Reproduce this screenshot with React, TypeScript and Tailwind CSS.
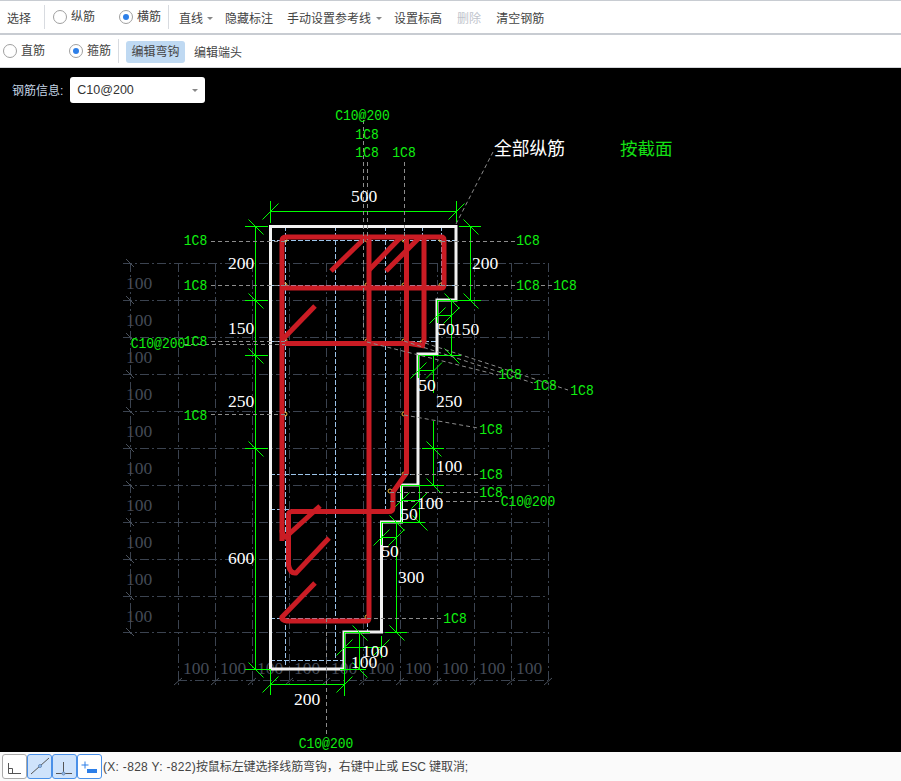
import type { ReactNode } from "react";

type Seg = [number, number, number, number];

const h = (y: number, x1: number, x2: number): Seg => [x1, y, x2, y];
const v = (x: number, y1: number, y2: number): Seg => [x, y1, x, y2];
const slash = (x: number, y: number): Seg => [x - 8, y + 8, x + 8, y - 8];
const back = (x: number, y: number): Seg => [x - 7, y - 7, x + 8, y + 8];

const gridX = [178, 215, 252, 289, 326, 363, 400, 437, 474, 511, 548];
const gridY = [263, 300, 337, 374, 411, 448, 485, 522, 559, 596, 632];

const greenLines: Seg[] = [
  // top 500
  h(211.5, 270.5, 456), v(270.5, 201, 223), v(456.5, 201, 222), slash(270.5, 211.5), slash(456.5, 211.5),
  // left chain
  v(255.5, 226.5, 669),
  h(226.5, 245, 268), back(255.5, 226.5),
  h(300.5, 245, 268), back(255.5, 300.5),
  h(355.5, 245, 268), back(255.5, 355.5),
  h(448.5, 245, 268), back(255.5, 448.5),
  h(669.5, 245, 270), back(255.5, 669.5),
  // right 200
  v(470.5, 226.5, 300), h(226.5, 459, 481), h(300.5, 437, 481), back(470.5, 226.5), back(470.5, 300.5),
  // first step
  v(451.5, 300, 355), h(355.5, 418, 461), back(451.5, 300.5), back(451.5, 355.5),
  v(437.5, 300, 323), h(315.5, 437.5, 451.5), slash(437.5, 315.5), slash(451.5, 315.5),
  // second step
  v(418.5, 355, 378), h(370.5, 418.5, 434), slash(418.5, 370.5), slash(434, 370.5),
  v(433.5, 355, 393), v(433.5, 421, 485), back(433.5, 448.5), h(448.5, 422, 444),
  back(433.5, 485.5), h(485.5, 402, 444),
  // third step
  v(401.5, 485, 522), h(500.5, 401.5, 419), v(419.5, 485, 522), slash(401.5, 500.5), slash(419.5, 500.5),
  h(522.5, 382, 425), back(419.5, 522.5), back(396.5, 522.5),
  v(396.5, 522, 632), h(632.5, 385, 407), back(396.5, 632.5),
  v(381.5, 522, 545), h(537.5, 381.5, 396.5), slash(381.5, 537.5), slash(396.5, 537.5),
  // bottom step
  h(632.5, 344, 370), back(359.5, 632.5), v(344.5, 632, 696), v(359.5, 632, 670),
  h(647.5, 344, 382), slash(344.5, 647.5), slash(381.5, 647.5), v(381.5, 636, 658),
  h(669.5, 340, 366), back(359.5, 669.5),
  // bottom 200
  h(684.5, 270.5, 344), v(270.5, 669, 695), slash(270.5, 684.5), slash(344.5, 684.5),
];

const paleLines: Seg[] = [
  v(285.5, 226, 665), v(335.5, 226, 660), v(385.5, 226, 510), v(404.5, 226, 345),
  v(422.5, 226, 345), v(441.5, 226, 290), v(367.5, 510, 632),
  h(240.5, 270, 456), h(285.5, 270, 456), h(341.5, 270, 437),
  h(474.5, 270, 418), h(509.5, 270, 385), h(618.5, 270, 370), h(660.5, 270, 343),
];

const greyLeaders: Seg[] = [
  h(241.5, 211, 285), h(285.5, 211, 285), h(341.5, 211, 285), h(344.5, 184, 285), h(414.5, 211, 285),
  h(241.5, 441, 516), h(285.5, 441, 516), h(285.5, 541, 552),
  v(363.5, 120, 340), v(367.5, 162, 240), v(404.5, 162, 240), v(326.5, 618, 738),
  [456, 224, 493, 152],
  [367, 342, 498, 375], [404, 341, 533, 383], [425, 343, 568, 390],
  [404, 415, 478, 428],
  h(474.5, 404, 478), h(492.5, 390, 478), h(501.5, 390, 500), h(618.5, 367, 441),
];

const rebarPaths = [
  "M282 541V241Q282 237 286 237H441Q444 237 444 240V285Q444 288 441 288H282",
  "M282 340L315 306",
  "M331 271L366 237",
  "M369 237V618Q369 621 366 621H287Q281 620 282 617L315 583",
  "M369 270L401 237",
  "M386 271L420 237",
  "M406.500 237V473L393 492V507Q393 511.500 389 511.500H292Q288 511.500 288.500 516V565Q290 574 296 573L329 538",
  "M424 237V344",
  "M282 343.500H410L425 346",
  "M282 530Q282 538 290 538",
  "M288 535L320 506",
];

const nodes: [number, number][] = [
  [285, 240], [285, 285], [285, 340], [285, 414], [367, 240], [367, 285], [404, 240], [404, 285],
  [441, 240], [441, 285], [367, 341], [404, 341], [422, 342], [404, 414], [404, 474], [390, 491], [367, 617],
];

type Label = [string, number, number];

const whiteLabels: Label[] = [
  ["500", 364, 196], ["200", 241, 263], ["200", 485, 263], ["150", 241, 328], ["50", 446, 329], ["150", 466, 329],
  ["50", 427, 385], ["250", 449, 401], ["250", 241, 401], ["100", 449, 466], ["100", 430, 503], ["50", 409, 514],
  ["50", 390, 551], ["300", 411, 577], ["100", 375, 651], ["100", 364, 662], ["600", 241, 558], ["200", 307, 699],
];

const greenLabels: Label[] = [
  ["C10@200", 362.5, 116], ["1C8", 367, 135], ["1C8", 367, 153], ["1C8", 404, 153],
  ["1C8", 195.5, 241], ["1C8", 195.5, 286], ["1C8", 195.5, 342], ["C10@200", 158, 344], ["1C8", 195.5, 416],
  ["1C8", 528, 241], ["1C8", 528, 286], ["1C8", 565, 286],
  ["1C8", 510, 375], ["1C8", 545, 386], ["1C8", 582, 391], ["1C8", 491, 430], ["1C8", 491, 475], ["1C8", 491, 493],
  ["C10@200", 528, 502], ["1C8", 455, 619], ["C10@200", 326, 744],
];

function Lines({ items, className, dash }: { items: Seg[]; className: string; dash?: string }) {
  return (
    <g className={className} strokeDasharray={dash}>
      {items.map(([x1, y1, x2, y2], i) => (
        <line key={i} x1={x1} y1={y1} x2={x2} y2={y2} />
      ))}
    </g>
  );
}

function Labels({ items, className, tall = 1 }: { items: Label[]; className: string; tall?: number }) {
  return (
    <g className={className} textAnchor="middle" dominantBaseline="central">
      {items.map(([text, x, y], i) => (
        <text key={i} transform={`translate(${x} ${y}) scale(1 ${tall})`}>
          {text}
        </text>
      ))}
    </g>
  );
}

function Drawing() {
  const gridLines: Seg[] = [
    ...gridY.map((y) => h(y + 0.5, 123, 548)),
    ...gridX.map((x) => v(x + 0.5, 263, 688)),
    v(130.5, 263, 636),
    h(680.5, 178, 548),
  ];
  const gridTicks: Seg[] = [
    ...gridY.map((y): Seg => [126, y - 4, 134, y + 4]),
    ...gridX.map((x): Seg => [x - 4, 685, x + 4, 678]),
  ];
  return (
    <svg className="absolute inset-0 h-full w-full" viewBox="0 68 901 684">
      <Lines items={gridLines} className="fill-none stroke-[#3b4350] stroke-1" dash="9 3 2 3" />
      <Lines items={gridTicks} className="fill-none stroke-[#4a515c] stroke-1" />
      <g className="fill-[#444b57] font-['Liberation_Serif',serif] text-[17.5px]" textAnchor="middle" dominantBaseline="central">
        {[283, 320, 357, 394, 431, 468, 505, 542, 579, 616].map((y) => (
          <text key={y} x={139} y={y}>100</text>
        ))}
        {[196, 233, 270, 307, 344, 381, 418, 455, 492, 529].map((x) => (
          <text key={x} x={x} y={668}>100</text>
        ))}
      </g>
      <Lines items={paleLines} className="fill-none stroke-[#9cc4ea] stroke-1" dash="5 2" />
      <path
        d="M270.5 226.500H456V300H437V354H418V485H401.500V522H381.500V632H344V669H270.500Z"
        className="fill-none stroke-[#f2f2f2] stroke-3"
      />
      <Lines items={greenLines} className="fill-none stroke-[#00ff00] stroke-1" />
      <g className="fill-none stroke-[#e8b838] stroke-1">
        {nodes.map(([x, y]) => (
          <circle key={`${x}-${y}`} cx={x} cy={y} r={2} />
        ))}
      </g>
      <g className="fill-none stroke-[#ca1c24] stroke-[5px]">
        {rebarPaths.map((d) => (
          <path key={d} d={d} />
        ))}
      </g>
      <Lines items={greyLeaders} className="fill-none stroke-[#8c8c8c] stroke-1" dash="4 3" />
      <Labels items={greenLabels} tall={1.18} className="fill-[#10f010] font-['Liberation_Mono',monospace] text-[13px]" />
      <Labels items={whiteLabels} className="fill-white font-['Liberation_Serif',serif] text-[17.5px]" />
      <text x={494} y={147} dominantBaseline="central" className="fill-white font-['Noto_Sans_CJK_SC',sans-serif] text-[17.8px]">
        全部纵筋
      </text>
      <text x={620} y={147} dominantBaseline="central" className="fill-[#14e014] font-['Noto_Sans_CJK_SC',sans-serif] text-[17.5px]">
        按截面
      </text>
    </svg>
  );
}

function Radio({ label, checked = false, className = "" }: { label: string; checked?: boolean; className?: string }) {
  return (
    <label className={`flex items-center gap-1 ${className}`}>
      <span className="flex h-[14px] w-[14px] items-center justify-center rounded-full border border-[#a0a0a0] bg-white">
        {checked ? <span className="h-[6px] w-[6px] rounded-full bg-[#2d7fe8]" /> : null}
      </span>
      <span>{label}</span>
    </label>
  );
}

function Caret() {
  return <span className="block h-0 w-0 border-x-[3px] border-t-[3px] border-x-transparent border-t-[#888]" />;
}

function Sep() {
  return <span className="block h-[24px] w-px bg-[#d8dbe0]" />;
}

function IconButton({ active, tint, children }: { active: boolean; tint: boolean; children: ReactNode }) {
  return (
    <button
      type="button"
      className={`h-[25px] w-[25px] rounded-[3px] border ${active ? "border-[#4a90e8]" : "border-[#aaaaaa]"} ${tint ? "bg-[#cfe3fb]" : "bg-white"}`}
    >
      <svg viewBox="0 0 23 23" className="h-[23px] w-[23px]">
        {children}
      </svg>
    </button>
  );
}

export default function App() {
  return (
    <div className="flex h-screen w-full flex-col overflow-hidden bg-black font-['Liberation_Sans','Noto_Sans_CJK_SC',sans-serif] text-[12px] text-[#444]">
      <div className="flex h-[35px] shrink-0 items-center border-t border-b-2 border-[#c8ccd2] bg-white">
        <span className="ml-[7px] pt-[3px]">选择</span>
        <span className="ml-[13px]"><Sep /></span>
        <Radio label="纵筋" className="ml-[8px]" />
        <Radio label="横筋" checked className="ml-[24px]" />
        <span className="ml-[7px]"><Sep /></span>
        <span className="ml-[10px] flex items-center gap-[4px] pt-[3px]">直线 <Caret /></span>
        <span className="ml-[12px] pt-[3px]">隐藏标注</span>
        <span className="ml-[14px] pt-[3px]">手动设置参考线</span>
        <span className="ml-[5px] pt-[3px]"><Caret /></span>
        <span className="ml-[12px] pt-[3px]">设置标高</span>
        <span className="ml-[15px] pt-[3px] text-[#c0c4cc]">删除</span>
        <span className="ml-[15px] pt-[3px]">清空钢筋</span>
      </div>
      <div className="flex h-[33px] shrink-0 items-center border-b border-[#d4d6da] bg-white">
        <Radio label="直筋" className="ml-[3px]" />
        <Radio label="箍筋" checked className="ml-[24px]" />
        <span className="ml-[7px]"><Sep /></span>
        <span className="ml-[7px] mt-[2px] flex h-[22px] w-[59px] items-center justify-center rounded-[3px] bg-[#bfd9f2]">编辑弯钩</span>
        <span className="ml-[9px] pt-[4px]">编辑端头</span>
      </div>
      <div className="relative flex-1">
        <Drawing />
        <div className="relative flex items-center gap-[6px] pl-[12px] pt-[9px]">
          <span className="pt-[2px] text-[#c4d4e4]">钢筋信息:</span>
          <div className="ml-px flex h-[26px] w-[135px] items-center justify-between rounded-[3px] bg-white px-[7px] text-[12.5px] text-[#333]">
            <span>C10@200</span>
            <Caret />
          </div>
        </div>
      </div>
      <div className="flex h-[29px] shrink-0 items-center bg-[#fafafa] pl-[2px]">
        <IconButton active={false} tint={false}>
          <path d="M5.500 8V18.500H18M5.500 13.500H9.500V18.500" fill="none" stroke="#555" />
        </IconButton>
        <IconButton active tint>
          <path d="M3 19L21 3" stroke="#555" />
          <circle cx="12" cy="11" r="1.500" fill="#9cc0ea" stroke="#6a90c0" />
        </IconButton>
        <IconButton active tint>
          <path d="M10.500 7V18M3 18.500H19" stroke="#555" />
          <circle cx="10.500" cy="18.500" r="1.500" fill="#9cc0ea" stroke="#6a90c0" />
        </IconButton>
        <IconButton active tint={false}>
          <path d="M7 6.500V13.500M3.500 10H10.500" stroke="#2d7fe8" />
          <rect x="9" y="14" width="10" height="4" fill="#2d7fe8" />
        </IconButton>
        <span className="ml-px tracking-[0.3px]">(X: -828 Y: -822)</span>
        <span className="tracking-[-0.1px]">按鼠标左键选择线筋弯钩，右键中止或 ESC 键取消;</span>
      </div>
    </div>
  );
}
